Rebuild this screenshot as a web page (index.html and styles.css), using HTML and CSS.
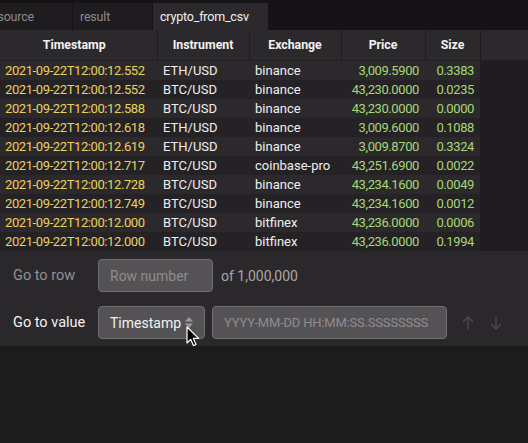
FILE: index.html
```html
<!DOCTYPE html>
<html lang="en">
<head>
  <meta charset="UTF-8">
  <meta name="viewport" content="width=device-width, initial-scale=1.0">
  <title>crypto_from_csv</title>
  <link rel="stylesheet" href="styles.css">
</head>
<body>
  <div class="tab-bar">
    <div class="tab tab-source">source</div>
    <div class="tab tab-result">result</div>
    <div class="tab tab-active">crypto_from_csv</div>
  </div>

  <table class="grid">
    <colgroup>
      <col class="col-ts">
      <col class="col-inst">
      <col class="col-exch">
      <col class="col-price">
      <col class="col-size">
      <col>
    </colgroup>
    <thead>
      <tr>
        <th class="th-ts">Timestamp</th>
        <th>Instrument</th>
        <th>Exchange</th>
        <th>Price</th>
        <th>Size</th>
        <th class="filler"></th>
      </tr>
    </thead>
    <tbody id="rows"></tbody>
  </table>

  <div class="goto-panel">
    <div class="goto-row">
      <span class="goto-label">Go to row</span>
      <input class="field field-row" type="text" placeholder="Row number">
      <span class="row-count">of 1,000,000</span>
    </div>
    <div class="goto-row">
      <span class="goto-label active">Go to value</span>
      <div class="field select">
        Timestamp
        <svg class="caret" width="10" height="13" viewBox="0 0 10 13">
          <path d="M5 1 L9 5.5 L1 5.5 Z" fill="#9c9a9d"/>
          <path d="M5 12 L9 7.5 L1 7.5 Z" fill="#9c9a9d"/>
        </svg>
        <svg class="cursor" width="14" height="22" viewBox="0 0 14 22">
          <path d="M1 1 L1 17 L4.8 13.4 L7.4 19.6 L10 18.5 L7.4 12.4 L12.6 12.4 Z" fill="#000" stroke="#fff" stroke-width="1.2" stroke-linejoin="round"/>
        </svg>
      </div>
      <input class="field field-value" type="text" placeholder="YYYY-MM-DD HH:MM:SS.SSSSSSSS">
      <svg class="step" width="14" height="16" viewBox="0 0 14 16">
        <path d="M7 15 V2 M2 7 L7 2 L12 7" fill="none" stroke="#4d4b4e" stroke-width="1.3"/>
      </svg>
      <svg class="step" width="14" height="16" viewBox="0 0 14 16">
        <path d="M7 1 V14 M2 9 L7 14 L12 9" fill="none" stroke="#4d4b4e" stroke-width="1.3"/>
      </svg>
    </div>
  </div>

  <script>
    const data = [
      ['2021-09-22T12:00:12.552', 'ETH/USD', 'binance', '3,009.5900', '0.3383'],
      ['2021-09-22T12:00:12.552', 'BTC/USD', 'binance', '43,230.0000', '0.0235'],
      ['2021-09-22T12:00:12.588', 'BTC/USD', 'binance', '43,230.0000', '0.0000'],
      ['2021-09-22T12:00:12.618', 'ETH/USD', 'binance', '3,009.6000', '0.1088'],
      ['2021-09-22T12:00:12.619', 'ETH/USD', 'binance', '3,009.8700', '0.3324'],
      ['2021-09-22T12:00:12.717', 'BTC/USD', 'coinbase-pro', '43,251.6900', '0.0022'],
      ['2021-09-22T12:00:12.728', 'BTC/USD', 'binance', '43,234.1600', '0.0049'],
      ['2021-09-22T12:00:12.749', 'BTC/USD', 'binance', '43,234.1600', '0.0012'],
      ['2021-09-22T12:00:12.000', 'BTC/USD', 'bitfinex', '43,236.0000', '0.0006'],
      ['2021-09-22T12:00:12.000', 'BTC/USD', 'bitfinex', '43,236.0000', '0.1994']
    ];

    const tbody = document.getElementById('rows');
    data.forEach(row => {
      const tr = document.createElement('tr');
      tr.innerHTML =
        `<td class="date">${row[0]}</td>` +
        `<td>${row[1]}</td>` +
        `<td>${row[2]}</td>` +
        `<td class="num">${row[3]}</td>` +
        `<td class="num">${row[4]}</td>` +
        `<td class="filler"></td>`;
      tbody.appendChild(tr);
    });
  </script>
</body>
</html>
```

FILE: styles.css
```css
body {
  margin: 0;
  background: #1d1c1d;
  font-family: Roboto, "Noto Sans", sans-serif;
  font-size: 13px;
  color: #f0efee;
  overflow: hidden;
}

/* tabs */
.tab-bar {
  display: flex;
  gap: 1px;
  height: 30px;
  padding-top: 3px;
  box-sizing: border-box;
  background: #161316;
}

.tab {
  display: flex;
  align-items: center;
  padding-left: 7px;
  box-sizing: border-box;
  background: #1f1c1f;
  color: #8c8a8d;
  font-size: 12.5px;
  letter-spacing: -0.2px;
}

.tab-source {
  width: 72px;
  justify-content: flex-end;
  padding-left: 0;
  padding-right: 38px;
}

.tab-result {
  width: 79px;
}

.tab-active {
  width: 115px;
  background: #2c292d;
  color: #f3f2f1;
}

/* table */
.grid {
  width: 528px;
  border-collapse: collapse;
  table-layout: fixed;
}

.col-ts { width: 157px; }
.col-inst { width: 92px; }
.col-exch { width: 92px; }
.col-price { width: 84px; }
.col-size { width: 55px; }

.grid th {
  height: 30px;
  padding: 0;
  background: #2c292d;
  border-right: 1px solid #1f1c20;
  border-bottom: 1px solid #222023;
  font-size: 12.3px;
  font-weight: bold;
  text-align: center;
  color: #f3f2f1;
}

.grid th.th-ts {
  padding-right: 8px;
}

.grid th.filler {
  border-right: none;
}

.grid td {
  height: 19px;
  padding: 0 6px;
  white-space: nowrap;
  overflow: hidden;
  background: #2c292d;
}

.grid tbody tr:nth-child(even) td {
  background: #252226;
}

.grid td:first-child {
  padding-left: 5px;
}

.grid tbody tr td.filler {
  background: #1f1c20;
}

.date {
  color: #ecd05c;
  letter-spacing: -0.4px;
}

.num {
  text-align: right;
  color: #a7d774;
  letter-spacing: -0.4px;
}

/* go to panel */
.goto-panel {
  display: flex;
  flex-direction: column;
  gap: 14px;
  padding: 8px 0 7px 13px;
  background: #2b282c;
  border-bottom: 1px solid #19181a;
}

.goto-row {
  display: flex;
  align-items: center;
  height: 33px;
}

.goto-label {
  width: 85px;
  font-size: 14.5px;
  color: #929093;
}

.goto-label.active {
  color: #f3f2f1;
}

.field {
  height: 33px;
  box-sizing: border-box;
  border: 1px solid #716f72;
  border-radius: 4px;
  background: #555256;
  font-family: inherit;
  font-size: 14px;
  color: #f3f2f1;
  outline: none;
}

.field::placeholder {
  color: #8e8c8f;
}

.field-row {
  width: 115px;
  padding: 0 11px;
}

.row-count {
  margin-left: 8px;
  font-size: 14px;
  color: #a9a7aa;
}

.select {
  position: relative;
  display: flex;
  align-items: center;
  width: 107px;
  padding-left: 11px;
}

.caret {
  margin-left: 3px;
}

.cursor {
  position: absolute;
  left: 87px;
  top: 19px;
}

.field-value {
  width: 235px;
  margin-left: 7px;
  padding: 0 8px 0 11px;
  font-size: 13px;
  letter-spacing: -0.2px;
}

.step {
  margin-left: 14px;
}
```
